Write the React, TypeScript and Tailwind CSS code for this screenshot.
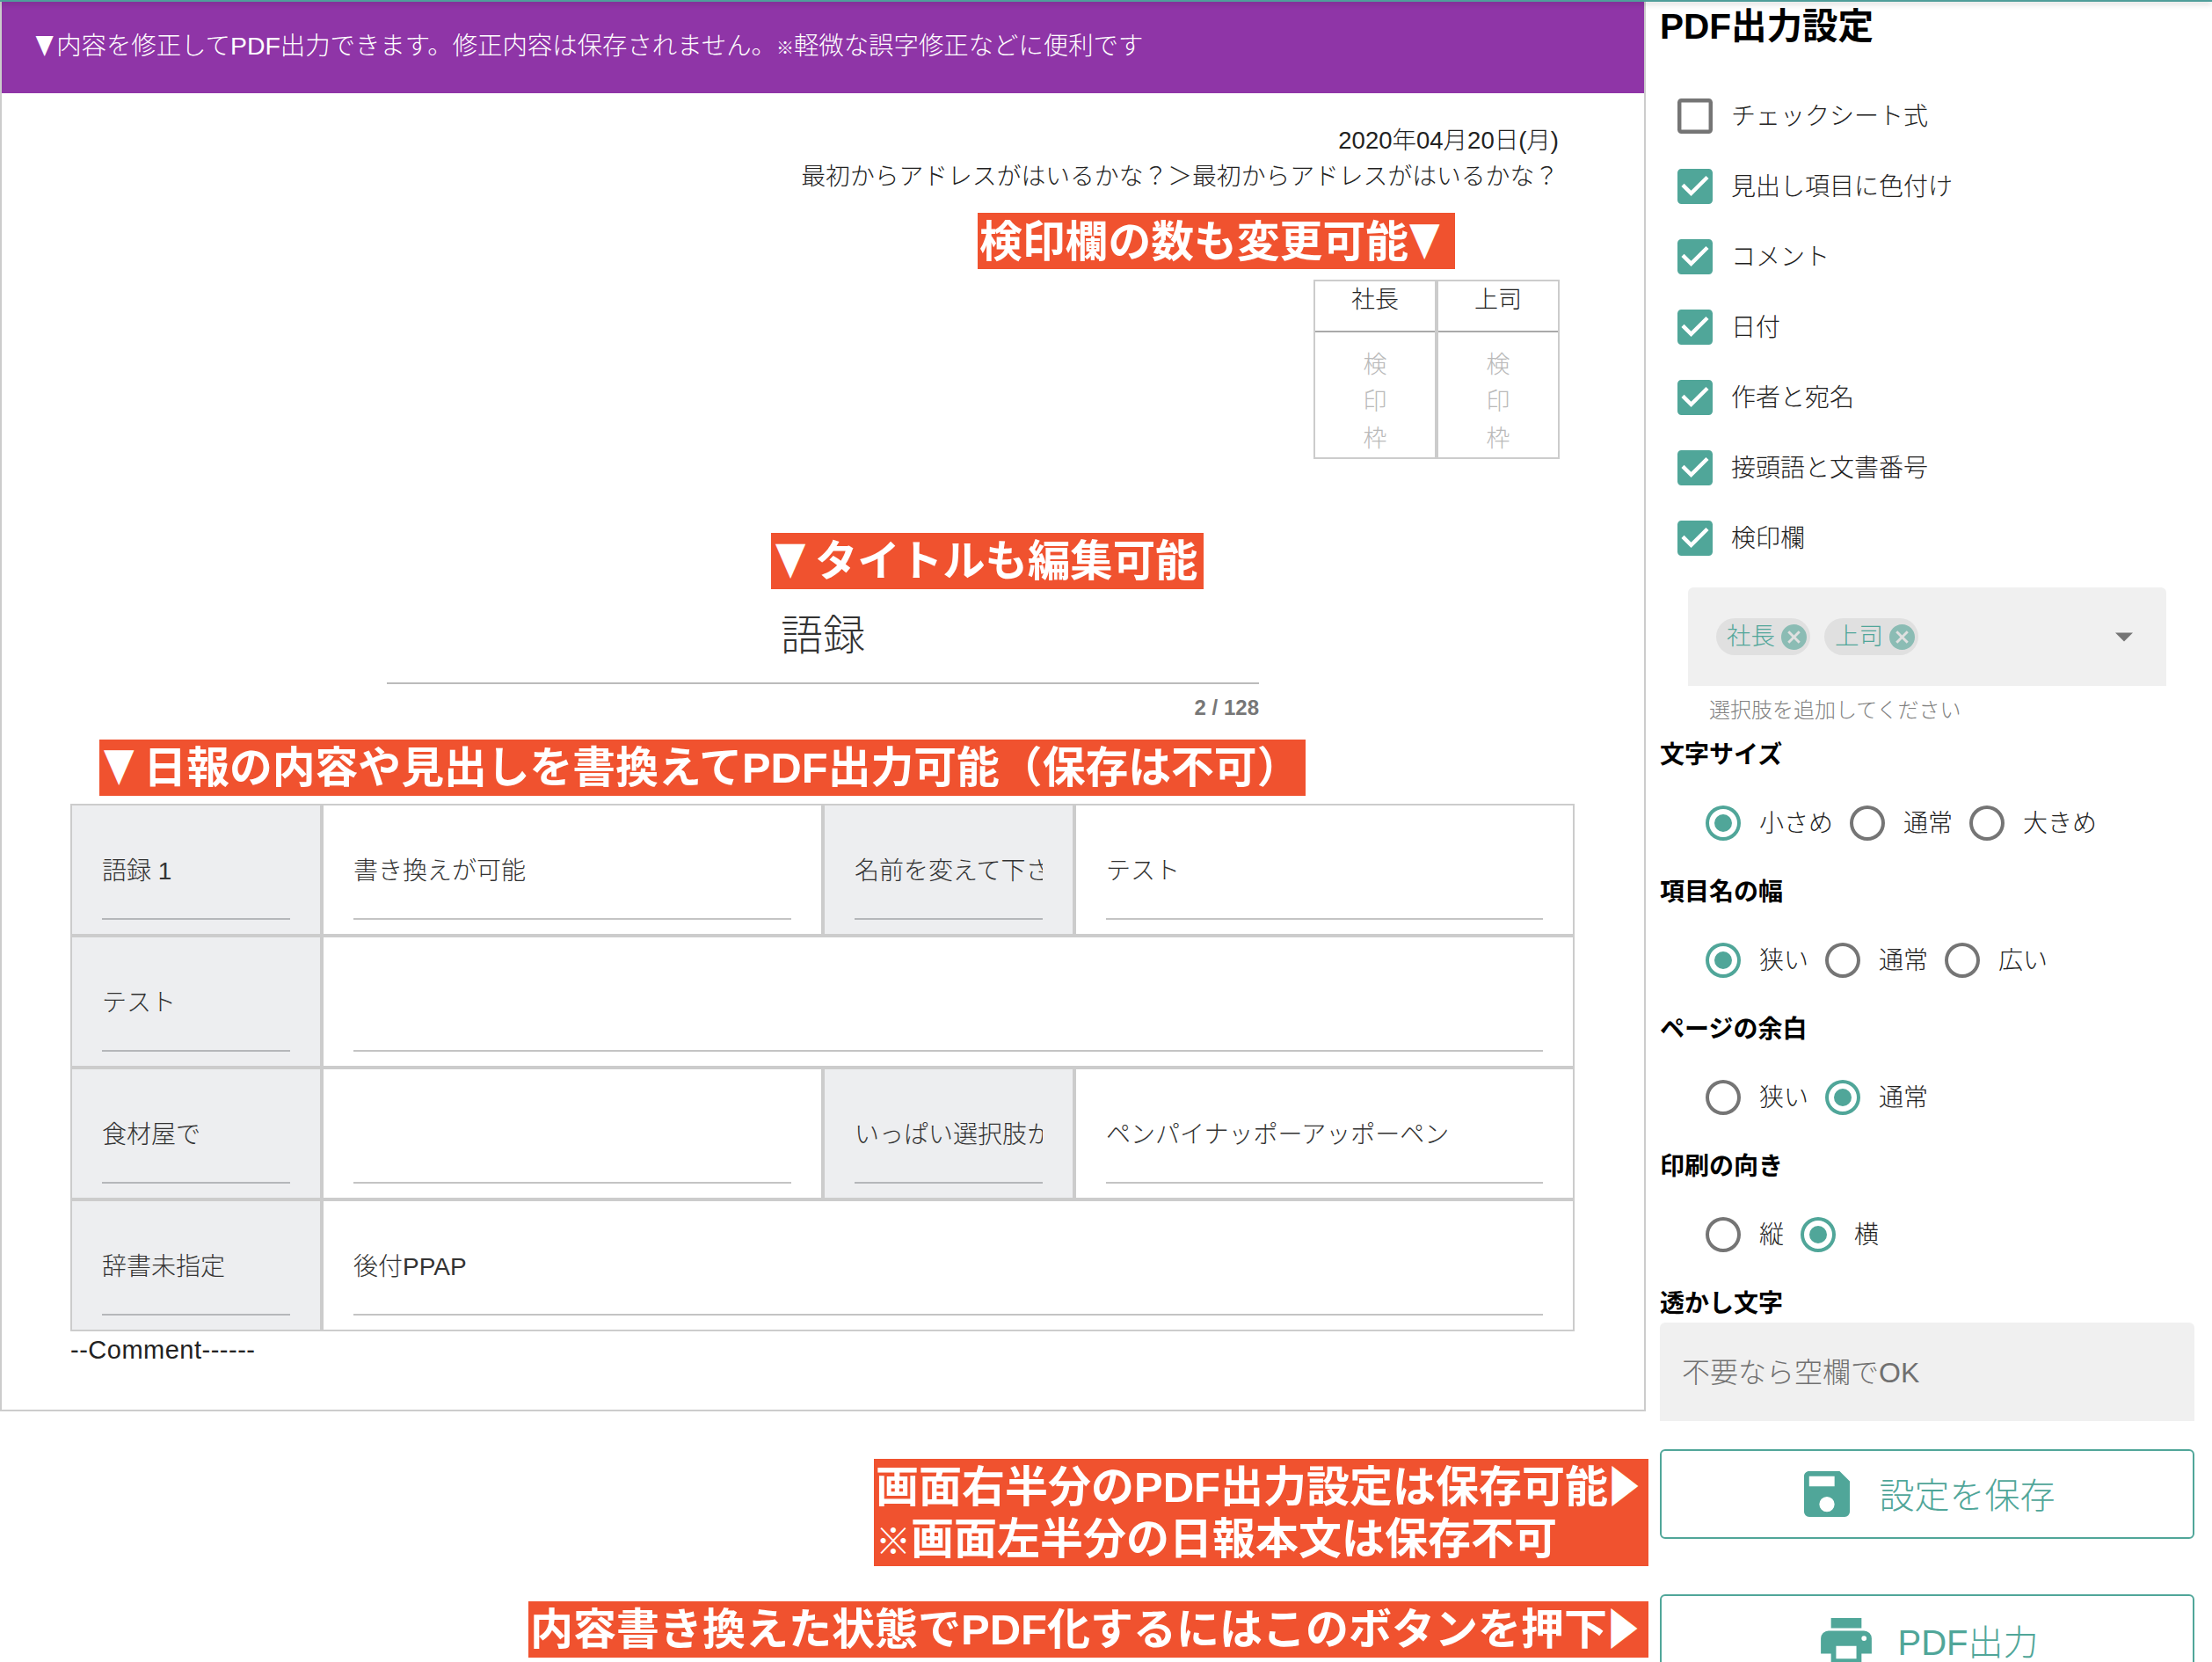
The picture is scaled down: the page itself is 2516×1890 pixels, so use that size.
const teal = "#50a699";

const checks = [
  { label: "チェックシート式", on: false },
  { label: "見出し項目に色付け", on: true },
  { label: "コメント", on: true },
  { label: "日付", on: true },
  { label: "作者と宛名", on: true },
  { label: "接頭語と文書番号", on: true },
  { label: "検印欄", on: true },
];

const radioGroups = [
  { title: "文字サイズ", options: ["小さめ", "通常", "大きめ"], picked: 0 },
  { title: "項目名の幅", options: ["狭い", "通常", "広い"], picked: 0 },
  { title: "ページの余白", options: ["狭い", "通常"], picked: 1 },
  { title: "印刷の向き", options: ["縦", "横"], picked: 1 },
];

function CheckIcon({ on }: { on: boolean }) {
  return (
    <svg viewBox="3 3 18 18" className="w-10 h-10 shrink-0">
      {on ? (
        <path
          fill={teal}
          d="M10,17L5,12L6.41,10.58L10,14.17L17.59,6.58L19,8M19,3H5C3.89,3 3,3.89 3,5V19A2,2 0 0,0 5,21H19A2,2 0 0,0 21,19V5C21,3.89 20.1,3 19,3Z"
        />
      ) : (
        <path
          fill="#757575"
          d="M19,3H5C3.89,3 3,3.89 3,5V19A2,2 0 0,0 5,21H19A2,2 0 0,0 21,19V5C21,3.89 20.1,3 19,3M19,5V19H5V5H19Z"
        />
      )}
    </svg>
  );
}

function RadioIcon({ on }: { on: boolean }) {
  return (
    <svg viewBox="2 2 20 20" className="w-10 h-10 shrink-0">
      <path
        fill={on ? teal : "#757575"}
        d={
          on
            ? "M12,20A8,8 0 0,1 4,12A8,8 0 0,1 12,4A8,8 0 0,1 20,12A8,8 0 0,1 12,20M12,2A10,10 0 0,0 2,12A10,10 0 0,0 12,22A10,10 0 0,0 22,12A10,10 0 0,0 12,2M12,7A5,5 0 0,0 7,12A5,5 0 0,0 12,17A5,5 0 0,0 17,12A5,5 0 0,0 12,7Z"
            : "M12,20A8,8 0 0,1 4,12A8,8 0 0,1 12,4A8,8 0 0,1 20,12A8,8 0 0,1 12,20M12,2A10,10 0 0,0 2,12A10,10 0 0,0 12,22A10,10 0 0,0 22,12A10,10 0 0,0 12,2Z"
        }
      />
    </svg>
  );
}

// the triangles in the picture are narrower than any installed glyph
function Tri({ children, className = "w-[0.95em]" }: { children: string; className?: string }) {
  return <span className={`inline-block leading-none font-['Noto_Sans_CJK_JP',sans-serif] scale-x-[0.75] origin-left ${className}`}>{children}</span>;
}

function Chip({ text }: { text: string }) {
  return (
    <div className="h-[42px] flex items-center rounded-full bg-[#e0e0e0] pl-[12px] pr-[4px] text-[27.5px] text-[#50a699]">
      {text}
      <svg viewBox="2 2 20 20" className="w-[29px] h-[29px] ml-[7px]">
        <path
          fill="#8bbcb4"
          d="M12,2C17.53,2 22,6.47 22,12C22,17.53 17.53,22 12,22C6.47,22 2,17.53 2,12C2,6.47 6.47,2 12,2M15.59,7L12,10.59L8.41,7L7,8.41L10.59,12L7,15.59L8.41,17L12,13.41L15.59,17L17,15.59L13.41,12L17,8.41L15.59,7Z"
        />
      </svg>
    </div>
  );
}

function Note({ className, children }: { className: string; children: React.ReactNode }) {
  return (
    <div className={`bg-[#f0522f] text-white font-bold whitespace-nowrap ${className}`}>
      {children}
    </div>
  );
}

function Cell({ label, text, span }: { label?: boolean; text: string; span?: boolean }) {
  return (
    <div className={`h-[150px] border-2 border-[#cccccc] px-[34px] ${label ? "bg-[#edeef0]" : "bg-white"} ${span ? "col-span-3" : ""}`}>
      <div className={`h-[114px] mt-[16px] pt-[5px] border-b-2 flex items-center whitespace-nowrap overflow-hidden text-[28px] text-[#333333] ${label ? "border-[#b5b7ba]" : "border-[#c4c4c4]"}`}>
        {text}
      </div>
    </div>
  );
}

function Stamp({ name }: { name: string }) {
  return (
    <div className="flex-1 border-2 border-[#cccccc] flex flex-col">
      <div className="h-[58px] border-b-2 border-[#aaaaaa] text-center text-[27px] leading-[42px] text-[#222222]">{name}</div>
      <div className="flex-1 flex flex-col items-center pt-[16px] text-[27px] leading-[42px] text-[#b9b9b9]">
        <span>検</span>
        <span>印</span>
        <span>枠</span>
      </div>
    </div>
  );
}

export default function App() {
  return (
    <div className="relative w-[2516px] h-[1890px] overflow-hidden bg-white font-light font-['Liberation_Sans','Noto_Sans_CJK_JP',sans-serif]">
      <div className="h-[2px] bg-[#4f9e9a] shadow-[0_2px_6px_rgba(0,0,0,0.3)] relative z-10" />
      <div className="flex">
        {/* preview */}
        <div className="w-[1872px] shrink-0">
          <div className="h-[1603px] border-2 border-t-0 border-[#cccccc] flex flex-col">
            <div className="h-[104px] shrink-0 bg-[#8f35a7] pl-[38px] pb-[4px] flex items-center text-white text-[28.4px] whitespace-nowrap">
              <span>
                <Tri className="w-[0.85em]">▼</Tri>内容を修正してPDF出力できます。修正内容は保存されません。<span className="text-[20px]">※</span>軽微な誤字修正などに便利です
              </span>
            </div>
            <div className="mt-[34px] pr-[97px] text-right leading-[40px] text-[#222222]">
              <div className="text-[27.5px]">2020年04月20日(月)</div>
              <div className="mt-[1px] text-[27.8px]">最初からアドレスがはいるかな？＞最初からアドレスがはいるかな？</div>
            </div>
            <Note className="self-end mr-[215px] mt-[21px] w-[543px] h-[64px] pl-[2px] text-[48.8px] leading-[66px]">
              検印欄の数も変更可能<Tri>▼</Tri>
            </Note>
            <div className="self-end mr-[96px] mt-[12px] w-[280px] h-[204px] flex">
              <Stamp name="社長" />
              <Stamp name="上司" />
            </div>
            <Note className="ml-[875px] mt-[84px] w-[492px] h-[64px] pl-[4px] text-[48.4px] leading-[64px]">
              <Tri>▼</Tri>タイトルも編集可能
            </Note>
            <div className="ml-[438px] w-[992px] h-[108px] border-b-2 border-[#bbbbbb] flex items-center justify-center text-[48px] text-[#333333]">
              語録
            </div>
            <div className="ml-[438px] w-[992px] h-[53px] pt-[1px] flex items-center justify-end text-[24px] font-bold text-[#777777]">
              2 / 128
            </div>
            <Note className="ml-[111px] mt-[10px] w-[1372px] h-[64px] pl-[4px] text-[48.8px] leading-[64px]">
              <Tri>▼</Tri>日報の内容や見出しを書換えてPDF出力可能（保存は不可）
            </Note>
            <div className="ml-[78px] mt-[9px] grid grid-cols-[286px_570px_286px_569px]">
              <Cell label text="語録 1" />
              <Cell text="書き換えが可能" />
              <Cell label text="名前を変えて下さい" />
              <Cell text="テスト" />
              <Cell label text="テスト" />
              <Cell span text="" />
              <Cell label text="食材屋で" />
              <Cell text="" />
              <Cell label text="いっぱい選択肢から" />
              <Cell text="ペンパイナッポーアッポーペン" />
              <Cell label text="辞書未指定" />
              <Cell span text="後付PPAP" />
            </div>
            <div className="ml-[78px] text-[29px] tracking-[0.5px] leading-[42px] text-[#222222]">--Comment------</div>
          </div>
          <Note className="ml-[994px] -mr-[3px] mt-[54px] h-[122px] text-[49px] leading-[59px] pt-[3px] pl-[2px]">
            画面右半分のPDF出力設定は保存可能<Tri>▶</Tri>
            <br />
            <span className="text-[40px]">※</span>画面左半分の日報本文は保存不可
          </Note>
          <Note className="ml-[601px] -mr-[3px] mt-[40px] h-[64px] pl-[2px] text-[49px] leading-[64px]">
            内容書き換えた状態でPDF化するにはこのボタンを押下<Tri>▶</Tri>
          </Note>
        </div>

        {/* settings */}
        <div className="flex-1 pl-[16px] pr-[20px]">
          <div className="h-[54px] pt-[2px] flex items-center text-[40.5px] font-bold text-black">PDF出力設定</div>
          <div className="mt-[36px] pl-[20px]">
            {checks.map((c) => (
              <div key={c.label} className="h-[80px] flex items-center gap-[21px] text-[28px] text-[#222222]">
                <CheckIcon on={c.on} />
                <span className="pt-[2px]">{c.label}</span>
              </div>
            ))}
          </div>
          <div className="mt-[16px] mx-[32px] h-[112px] bg-[#f0f0f0] rounded-t-[6px] flex items-center pl-[32px] pr-[38px] gap-[16px]">
            <Chip text="社長" />
            <Chip text="上司" />
            <svg viewBox="7 10 10 5" className="ml-auto w-[20px] h-[11px]">
              <path fill="#757575" d="M7,10L12,15L17,10H7Z" />
            </svg>
          </div>
          <div className="mt-[11px] h-[34px] ml-[56px] flex items-center text-[24px] text-[#808080]">選択肢を追加してください</div>
          <div className="mt-[12px]">
            {radioGroups.map((g) => (
              <div key={g.title} className="h-[156px]">
                <div className="h-[40px] pt-[3px] flex items-center text-[28px] font-bold text-black">{g.title}</div>
                <div className="mt-[39px] h-[40px] ml-[52px] flex items-center text-[28px] text-[#222222]">
                  {g.options.map((o, idx) => (
                    <div key={o} className="flex items-center gap-[21px] mr-[19px]">
                      <RadioIcon on={idx === g.picked} />
                      <span className="pt-[2px]">{o}</span>
                    </div>
                  ))}
                </div>
              </div>
            ))}
          </div>
          <div className="h-[40px] pt-[3px] flex items-center text-[28px] font-bold text-black">透かし文字</div>
          <div className="mt-[3px] h-[112px] bg-[#f0f0f0] rounded-t-[6px] pl-[25px] pt-[2px] flex items-center text-[32px] text-[#707070]">
            不要なら空欄でOK
          </div>
          <div className="mt-[32px] h-[102px] border-2 border-[#50a699] rounded-[6px] pl-[5px] flex items-center justify-center gap-[34px] text-[40px] text-[#50a699]">
            <svg viewBox="3 3 18 18" className="w-[52px] h-[52px]">
              <path
                fill={teal}
                d="M15,9H5V5H15M12,19A3,3 0 0,1 9,16A3,3 0 0,1 12,13A3,3 0 0,1 15,16A3,3 0 0,1 12,19M17,3H5C3.89,3 3,3.9 3,5V19A2,2 0 0,0 5,21H19A2,2 0 0,0 21,19V7L17,3Z"
              />
            </svg>
            <span className="pt-[3px]">設定を保存</span>
          </div>
          <div className="mt-[63px] h-[106px] border-2 border-[#50a699] rounded-[6px] pl-[5px] flex items-center justify-center gap-[30px] text-[40px] text-[#50a699]">
            <svg viewBox="2 3 20 18" className="w-[58px] h-[52px]">
              <path
                fill={teal}
                d="M18,3H6V7H18M19,12A1,1 0 0,1 18,11A1,1 0 0,1 19,10A1,1 0 0,1 20,11A1,1 0 0,1 19,12M16,19H8V14H16M19,8H5A3,3 0 0,0 2,11V17H6V21H18V17H22V11A3,3 0 0,0 19,8Z"
              />
            </svg>
            <span className="pt-[4px]">PDF出力</span>
          </div>
        </div>
      </div>
    </div>
  );
}
